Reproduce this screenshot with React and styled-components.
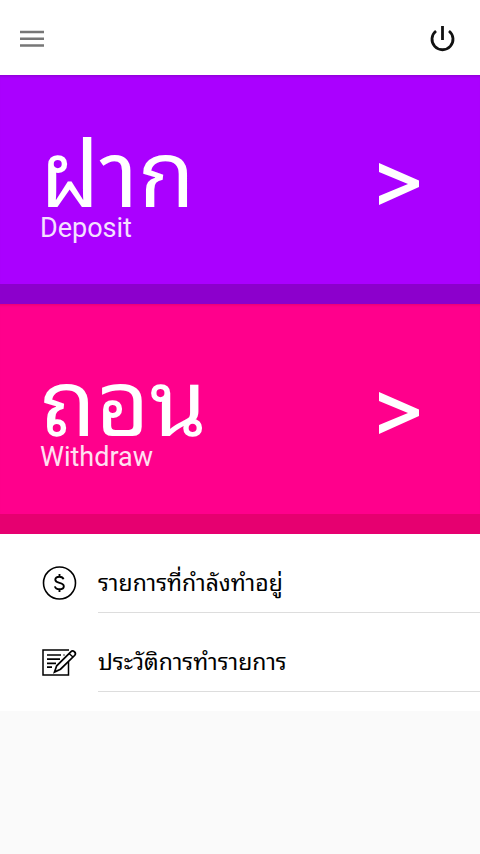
import React from "react";
import styled, { createGlobalStyle } from "styled-components";

const GlobalStyle = createGlobalStyle`
  *, *::before, *::after { box-sizing: border-box; }
  body {
    margin: 0;
    background: #fafafa;
    color: #111;
    font-family: Roboto, "Noto Sans Thai Looped", "Noto Sans", sans-serif;
  }
`;

const Header = styled.header`
  display: flex;
  align-items: center;
  justify-content: space-between;
  height: 75px;
  padding: 3px 20px 0;
  background: #fff;
`;

const IconButton = styled.button`
  display: flex;
  padding: 0;
  border: 0;
  background: none;
  color: ${({ $color }) => $color};
  cursor: pointer;
`;

const ActionButton = styled.button`
  display: flex;
  align-items: center;
  justify-content: space-between;
  width: 100%;
  height: ${({ $height }) => $height}px;
  padding: 8px 60px 0 40px;
  border: 0;
  border-bottom: 20px solid ${({ $edge }) => $edge};
  background: ${({ $fill }) => $fill};
  box-shadow: inset 0 3px 3px -2px ${({ $edge }) => $edge};
  color: #fff;
  font-family: inherit;
  text-align: left;
  cursor: pointer;
`;

const ActionText = styled.span`
  display: flex;
  flex-direction: column;
  padding-top: 12px;
`;

const ActionTitle = styled.span`
  font-size: 92px;
  line-height: 76px;
`;

const ActionSubtitle = styled.span`
  font-size: 27px;
  line-height: 28px;
  opacity: 0.88;
`;

const List = styled.ul`
  margin: 0;
  padding: 0 0 19px;
  list-style: none;
  background: #fff;
`;

const ListLink = styled.a`
  display: flex;
  align-items: center;
  gap: 20px;
  padding-left: 40px;
  color: #000;
  text-decoration: none;
`;

const ListLabel = styled.span`
  flex: 1;
  padding: 34px 0 12px;
  border-bottom: 1px solid #ddd;
  font-size: 23px;
  line-height: 32px;
`;

const ListIcon = styled.span`
  display: flex;
  padding-top: 18px;
`;

const MenuIcon = () => (
  <svg width="24" height="18" viewBox="0 0 24 18" aria-hidden="true">
    <path d="M0 2h24M0 8.700h24M0 15.400h24" stroke="currentColor" strokeWidth="2.5" />
  </svg>
);

const PowerIcon = () => (
  <svg width="34" height="30" viewBox="0 0 34 30" fill="none" stroke="currentColor" strokeWidth="2.8" aria-hidden="true">
    <path d="M16.500 2v14M10 7a10.500 10.500 0 1 0 13 0" />
  </svg>
);

const ChevronIcon = () => (
  <svg width="42" height="42" viewBox="0 0 42 42" fill="currentColor" aria-hidden="true">
    <path d="M1 0L41 17.500V24L1 42V33L30 21L1 9Z" />
  </svg>
);

const DollarIcon = () => (
  <svg width="38" height="36" viewBox="0 0 38 36" fill="none" stroke="currentColor" strokeWidth="1.600" aria-hidden="true">
    <circle cx="19.500" cy="18" r="16" />
    <path d="M23.500 14.300c-.5-1.700-2-2.600-4.200-2.600-2.500 0-4 1.200-4 3 0 4.300 8.500 2 8.500 6.500 0 1.900-1.700 3.100-4.300 3.100s-4.200-1.100-4.600-2.900M19.500 9v3M19.500 24v3" strokeWidth="1.900" />
  </svg>
);

const NoteIcon = () => (
  <svg width="38" height="36" viewBox="0 0 38 36" fill="none" stroke="currentColor" strokeWidth="1.500" aria-hidden="true">
    <path d="M29 6H3v25h25.500V18" />
    <path d="M7 11h14M7 15.200h13M7 19.300h9M7 23.200h5" strokeWidth="1.700" />
    <path d="M23.500 11h1" />
    <path d="M14.500 28l2.200-6.200L30.800 7.800c2.200-2.100 6 .8 4 3.500L20.500 25.200Z" fill="#fff" strokeWidth="1.700" />
    <path d="M29 9.500l4 3.500" strokeWidth="1.400" />
  </svg>
);

const actions = [
  { title: "ฝาก", subtitle: "Deposit", fill: "#aa00ff", edge: "#8c00cc", height: 229 },
  { title: "ถอน", subtitle: "Withdraw", fill: "#ff008c", edge: "#e60070", height: 230 },
];

const links = [
  { label: "รายการที่กำลังทำอยู่", Icon: DollarIcon },
  { label: "ประวัติการทำรายการ", Icon: NoteIcon },
];

export default function App() {
  return (
    <>
      <GlobalStyle />
      <Header>
        <IconButton type="button" aria-label="Menu" $color="#777">
          <MenuIcon />
        </IconButton>
        <IconButton type="button" aria-label="Log out" $color="#111">
          <PowerIcon />
        </IconButton>
      </Header>
      <main>
        {actions.map(({ title, subtitle, fill, edge, height }) => (
          <ActionButton key={subtitle} type="button" $fill={fill} $edge={edge} $height={height}>
            <ActionText>
              <ActionTitle lang="th">{title}</ActionTitle>
              <ActionSubtitle>{subtitle}</ActionSubtitle>
            </ActionText>
            <ChevronIcon />
          </ActionButton>
        ))}
        <List>
          {links.map(({ label, Icon }) => (
            <li key={label}>
              <ListLink href="#">
                <ListIcon>
                  <Icon />
                </ListIcon>
                <ListLabel lang="th">{label}</ListLabel>
              </ListLink>
            </li>
          ))}
        </List>
      </main>
    </>
  );
}
